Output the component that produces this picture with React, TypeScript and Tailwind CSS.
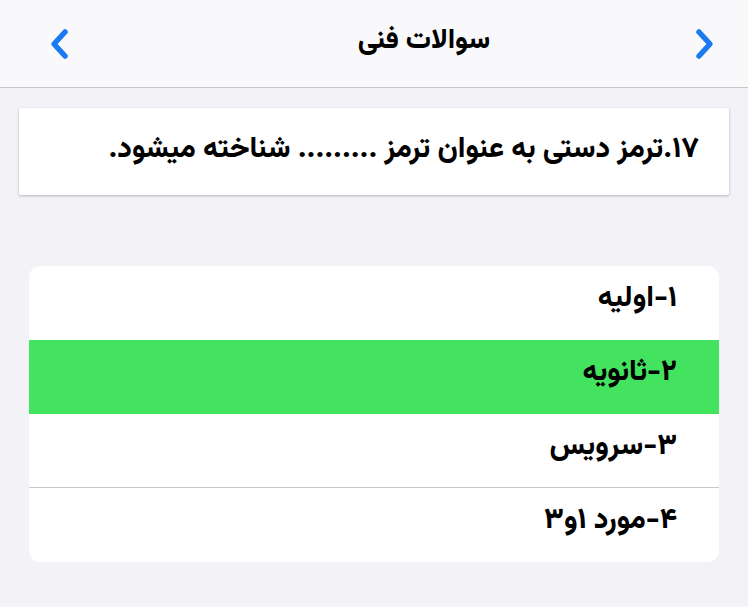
import React from "react";

function Chevron({ dir }: { dir: "left" | "right" }) {
  return (
    <svg width="22" height="32" viewBox="0 0 22 32" fill="none" stroke="#1a7cf0" strokeWidth="5.5" strokeLinecap="round" strokeLinejoin="round">
      {dir === "left" ? <polyline points="16 4 5 16 16 28" /> : <polyline points="6 4 17 16 6 28" />}
    </svg>
  );
}

const options = [
  { label: "۱-اولیه", correct: false },
  { label: "۲-ثانویه", correct: true },
  { label: "۳-سرویس", correct: false },
  { label: "۴-مورد ۱و۳", correct: false },
];

export default function App() {
  return (
    <div className="h-[607px] w-[748px] overflow-hidden bg-[#f2f2f7]" style={{ fontFamily: '"Vazirmatn", "Noto Sans Arabic", sans-serif' }}>
      <header className="flex h-[88px] items-center justify-between border-b border-[#c8c8cc] bg-[#f9f9fb] pl-[49px] pr-[33px]">
        <Chevron dir="left" />
        <h1 dir="rtl" className="-mt-[6px] pl-[84px] text-[28px] font-extrabold text-black">سوالات فنی</h1>
        <Chevron dir="right" />
      </header>

      <div className="mx-[19px] mt-[20px] flex h-[87px] items-center rounded-[2px] bg-white px-[30px] shadow-[0_1px_3px_rgba(0,0,0,0.25)]">
        <p dir="rtl" className="-mt-[2px] w-full text-[29px] font-extrabold text-black">
          ۱۷.ترمز دستی به عنوان ترمز ......... شناخته میشود.
        </p>
      </div>

      <div className="mx-[29px] mt-[71px] overflow-hidden rounded-[12px] bg-white">
        {options.map((o, i) => (
          <div
            key={o.label}
            dir="rtl"
            className={`flex h-[74px] items-center pb-[6px] pr-[42px] text-[29px] font-extrabold text-black ${o.correct ? "bg-[#44e35f]" : "bg-white"} ${i === 2 ? "border-b border-[#c8c8cc]" : ""}`}
          >
            {o.label}
          </div>
        ))}
      </div>
    </div>
  );
}
